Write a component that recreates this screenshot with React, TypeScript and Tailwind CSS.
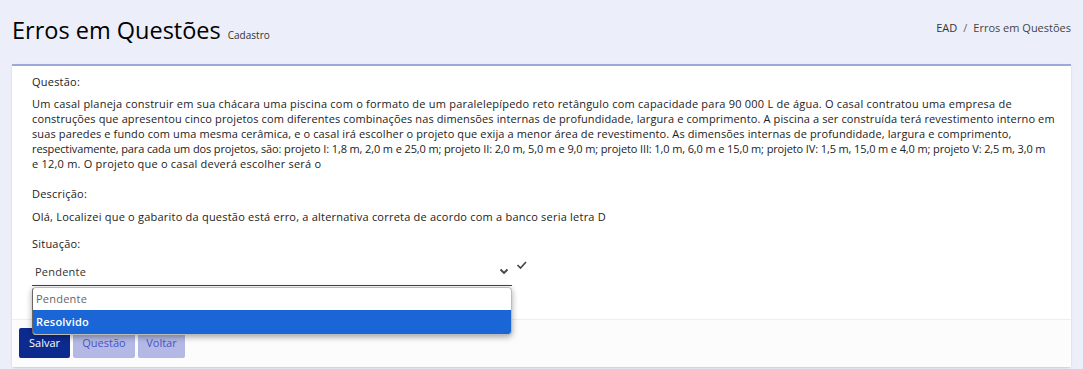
import React from "react";

export default function App() {
  const font = { fontFamily: '"Open Sans", "Noto Sans", sans-serif' };
  return (
    <div className="min-h-[369px] w-[1083px] overflow-hidden bg-[#eceefa] text-[#333]" style={font}>
      <div className="flex items-end justify-between px-3 pt-[16px] h-[64px]">
        <div className="flex items-baseline gap-[7px] pb-[21px]">
          <h1 className="text-[23.5px] leading-none text-black">Erros em Questões</h1>
          <span className="text-[10px] text-[#333]">Cadastro</span>
        </div>
        <div className="flex items-center gap-[6px] pb-[28px] text-[11px]">
          <span className="text-[#333]">EAD</span>
          <span className="text-[#666]">/</span>
          <span className="text-[#444]">Erros em Questões</span>
        </div>
      </div>
      <div className="mx-3 w-[1059px] rounded-b-[3px] border-t-2 border-[#9ea8d8] bg-white shadow-[0_1px_2px_rgba(0,0,0,0.15)]">
        <div className="px-5 pt-[8px] pb-[33px] text-[11px] leading-[15px] text-[#222] tracking-[0.22px]">
          <div className="mb-[7px]">Questão:</div>
          <div className="whitespace-nowrap">
            <div>Um casal planeja construir em sua chácara uma piscina com o formato de um paralelepípedo reto retângulo com capacidade para 90 000 L de água. O casal contratou uma empresa de</div>
            <div className="tracking-[0.12px]">construções que apresentou cinco projetos com diferentes combinações nas dimensões internas de profundidade, largura e comprimento. A piscina a ser construída terá revestimento interno em</div>
            <div className="tracking-[0.12px]">suas paredes e fundo com uma mesma cerâmica, e o casal irá escolher o projeto que exija a menor área de revestimento. As dimensões internas de profundidade, largura e comprimento,</div>
            <div className="tracking-[-0.12px]">respectivamente, para cada um dos projetos, são: projeto I: 1,8 m, 2,0 m e 25,0 m; projeto II: 2,0 m, 5,0 m e 9,0 m; projeto III: 1,0 m, 6,0 m e 15,0 m; projeto IV: 1,5 m, 15,0 m e 4,0 m; projeto V: 2,5 m, 3,0 m</div>
            <div>e 12,0 m. O projeto que o casal deverá escolher será o</div>
          </div>
          <div className="mt-[15px] mb-[8px]">Descrição:</div>
          <p>Olá, Localizei que o gabarito da questão está erro, a alternativa correta de acordo com a banco seria letra D</p>
          <div className="mt-[12px]">Situação:</div>
          <div className="relative mt-[13px] flex items-start">
            <div className="relative w-[480px] border-b border-[#444] pb-[6px] pl-[3px] text-[#333]">
              Pendente
              <svg className="absolute right-[3px] top-[2px]" width="10" height="10" viewBox="0 0 10 10">
                <path d="M1.5 3.5 L5 7 L8.5 3.5" fill="none" stroke="#444" strokeWidth="1.8" />
              </svg>
              <div className="absolute left-0 top-[23px] z-10 w-[480px] overflow-hidden rounded-[4px] border border-[#bbb] border-l-[#666] bg-white shadow-[0_2px_6px_rgba(0,0,0,0.35)]">
                <div className="h-[22px] pl-[3px] leading-[22px] text-[#666]">Pendente</div>
                <div className="h-[24px] bg-[#1a66d6] pl-[3px] font-semibold leading-[24px] text-white">Resolvido</div>
              </div>
            </div>
            <svg className="ml-[4px] mt-[-4px]" width="12" height="10" viewBox="0 0 12 10">
              <path d="M1.5 5 L4.5 8 L10 2" fill="none" stroke="#444" strokeWidth="1.6" />
            </svg>
          </div>
        </div>
        <div className="flex gap-[3px] border-t border-[#eee] bg-[#fcfcfc] px-[7px] pt-[8px] pb-[9px] text-[11px]">
          <button className="h-[30px] w-[51px] rounded-[2px] bg-[#0d2a8f] text-white">Salvar</button>
          <button className="h-[30px] w-[62px] rounded-[2px] bg-[#b3b9e4] text-[#4a55c8]">Questão</button>
          <button className="h-[30px] w-[47px] rounded-[2px] bg-[#b3b9e4] text-[#4a55c8]">Voltar</button>
        </div>
      </div>
    </div>
  );
}
